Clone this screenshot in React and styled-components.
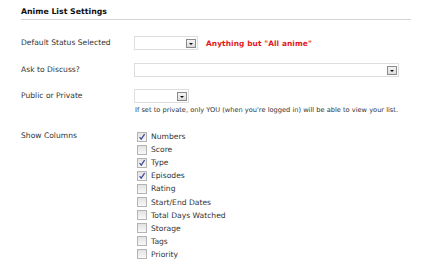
import React from "react";
import styled, { createGlobalStyle } from "styled-components";

const Global = createGlobalStyle`
  html, body { margin: 0; padding: 0; background: #fff; }
  body { font-family: "DejaVu Sans", Verdana, sans-serif; }
`;

const Page = styled.div`
  width: 390px;
  padding: 7px 0 0 21px;
`;

const Title = styled.div`
  font-weight: bold;
  font-size: 7.8px;
  line-height: 10px;
  color: #111;
  padding-bottom: 2px;
  border-bottom: 1px solid #d4d4d4;
`;

const Row = styled.div`
  display: grid;
  grid-template-columns: 113px 1fr;
  align-items: start;
  margin-top: ${(p) => p.$gap}px;
`;

const Label = styled.div`
  font-size: 7.6px;
  line-height: ${(p) => p.$lh || 14}px;
  color: #333;
`;

const Control = styled.div`
  display: flex;
  flex-direction: ${(p) => (p.$column ? "column" : "row")};
  align-items: ${(p) => (p.$column ? "flex-start" : "center")};
  gap: ${(p) => p.$gapX || 0}px;
`;

const SelectBox = styled.div`
  box-sizing: border-box;
  width: ${(p) => p.$w}px;
  height: 14px;
  border: 1px solid #dedede;
  background: #fff;
  display: flex;
  align-items: center;
  justify-content: flex-end;
  padding-right: 1px;
`;

const DropButton = styled.div`
  box-sizing: border-box;
  width: 10px;
  height: 9px;
  border: 1px solid #8a8a8a;
  background: linear-gradient(#f4f4f4, #dcdcdc);
  display: flex;
  align-items: center;
  justify-content: center;
  &::after {
    content: "";
    display: block;
    margin-top: 1px;
    border-left: 2.5px solid transparent;
    border-right: 2.5px solid transparent;
    border-top: 2.5px solid #111;
  }
`;

const Warn = styled.span`
  font-size: 7.4px;
  font-weight: bold;
  color: #e3171d;
  letter-spacing: 0.1px;
`;

const Note = styled.div`
  font-size: 6.65px;
  line-height: 10px;
  color: #333;
  margin-top: 2px;
  margin-left: 1px;
`;

const List = styled.div`
  display: flex;
  flex-direction: column;
  padding-top: 1px;
  padding-left: 3px;
`;

const Item = styled.label`
  display: flex;
  align-items: center;
  height: 13.1px;
  font-size: 7.6px;
  color: #333;
  gap: 4px;
`;

const Box = styled.span`
  box-sizing: border-box;
  width: 10px;
  height: 10px;
  border: 1px solid #b4b4b4;
  background: linear-gradient(#e2e2e2, #f8f8f8);
  display: flex;
  align-items: center;
  justify-content: center;
`;

function Select({ w }) {
  return (
    <SelectBox $w={w}>
      <DropButton />
    </SelectBox>
  );
}

function Check({ checked, children }) {
  return (
    <Item>
      <Box>
        {checked && (
          <svg width="8" height="8" viewBox="0 0 8 8">
            <path d="M1.6 4.2 L3.2 6.2 L6.6 1.2" fill="none" stroke="#3b4a9c" strokeWidth="1.2" />
          </svg>
        )}
      </Box>
      {children}
    </Item>
  );
}

const columns = [
  ["Numbers", true],
  ["Score", false],
  ["Type", true],
  ["Episodes", true],
  ["Rating", false],
  ["Start/End Dates", false],
  ["Total Days Watched", false],
  ["Storage", false],
  ["Tags", false],
  ["Priority", false],
];

export default function App() {
  return (
    <>
      <Global />
      <Page>
        <Title>Anime List Settings</Title>
        <Row $gap={16}>
          <Label>Default Status Selected</Label>
          <Control $gapX={8}>
            <Select w={64} />
            <Warn>Anything but "All anime"</Warn>
          </Control>
        </Row>
        <Row $gap={13}>
          <Label>Ask to Discuss?</Label>
          <Control>
            <Select w={265} />
          </Control>
        </Row>
        <Row $gap={12}>
          <Label>Public or Private</Label>
          <Control $column>
            <Select w={55} />
            <Note>If set to private, only YOU (when you're logged in) will be able to view your list.</Note>
          </Control>
        </Row>
        <Row $gap={14}>
          <Label $lh={13}>Show Columns</Label>
          <List>
            {columns.map(([name, c]) => (
              <Check key={name} checked={c}>{name}</Check>
            ))}
          </List>
        </Row>
      </Page>
    </>
  );
}
